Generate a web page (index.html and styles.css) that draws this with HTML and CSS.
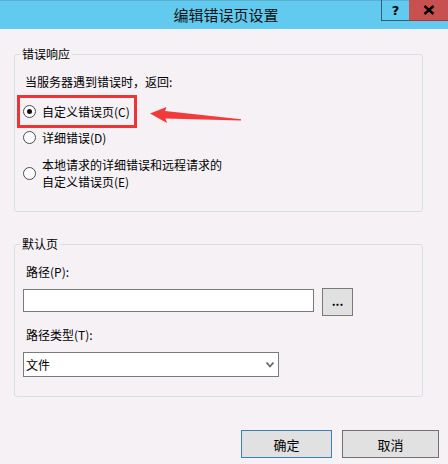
FILE: index.html
```html
<!DOCTYPE html>
<html lang="zh">
<head>
<meta charset="utf-8">
<title>编辑错误页设置</title>
<link rel="stylesheet" href="styles.css">
</head>
<body>
<div class="window">
  <div class="titlebar">
    <div class="title">编辑错误页设置</div>
    <div class="caption-buttons">
      <div class="cap-btn help">?</div>
      <div class="cap-btn close">
        <svg width="12" height="10" viewBox="0 0 12 10"><path d="M1.5 1 L10.5 9 M10.5 1 L1.5 9" stroke="#000" stroke-width="2.4"/></svg>
      </div>
    </div>
  </div>
  <div class="content">
    <fieldset class="group group-response">
      <legend>错误响应</legend>
      <div class="group-body">
        <div class="prompt">当服务器遇到错误时，返回:</div>
        <div class="radio-row row1"><span class="radio checked"></span><span>自定义错误页(C)</span></div>
        <div class="radio-row row2"><span class="radio"></span><span>详细错误(D)</span></div>
        <div class="radio-row row3"><span class="radio"></span><span>本地请求的详细错误和远程请求的<br>自定义错误页(E)</span></div>
      </div>
    </fieldset>
    <fieldset class="group group-default">
      <legend>默认页</legend>
      <div class="group-body">
        <div class="label">路径(P):</div>
        <div class="path-row">
          <div class="textbox"></div>
          <div class="browse">...</div>
        </div>
        <div class="label label-type">路径类型(T):</div>
        <div class="select">
          <span>文件</span>
          <svg width="8" height="6" viewBox="0 0 8 6"><path d="M0.5 0.5 L4 4.5 L7.5 0.5" fill="none" stroke="#6a6a6a" stroke-width="1.8"/></svg>
        </div>
      </div>
    </fieldset>
    <div class="footer">
      <div class="btn ok">确定</div>
      <div class="btn cancel">取消</div>
    </div>
  </div>
  <div class="highlight"></div>
  <svg class="arrow" width="96" height="20" viewBox="148 105 96 20">
    <polygon points="150,113.5 166.5,107 165,111 241,119.3 241,120.6 165.5,118.5 167,123" fill="#f23a3a"/>
  </svg>
</div>
</body>
</html>
```

FILE: styles.css
```css
* { box-sizing: border-box; }
html, body {
  margin: 0;
  padding: 0;
}
body {
  width: 448px;
  height: 464px;
  overflow: hidden;
  background: #f5f1f5;
  font-family: "Noto Sans CJK SC", "Microsoft YaHei", sans-serif;
  font-size: 12px;
  color: #000;
}
.window {
  position: relative;
  width: 448px;
  height: 464px;
}
.titlebar {
  position: relative;
  height: 29px;
  background: #62caee;
  border-top: 1px solid #5aaed0;
  display: flex;
  justify-content: center;
  align-items: center;
}
.title {
  font-size: 15px;
  line-height: 20px;
  color: #111;
  padding-left: 4px;
}
.caption-buttons {
  position: absolute;
  top: -1px;
  right: 0;
  display: flex;
}
.cap-btn {
  height: 21px;
  display: flex;
  align-items: center;
  justify-content: center;
}
.help {
  width: 28px;
  border-left: 1px solid #2e5f76;
  border-bottom: 1px solid #2e5f76;
  font-family: "DejaVu Sans", sans-serif;
  font-weight: bold;
  font-size: 13px;
  line-height: 1;
}
.close {
  width: 39px;
  background: #c75050;
  border-bottom: 1px solid #9e3b3b;
}
.content {
  padding: 17px 25px 0 14px;
}
.group {
  margin: 0;
  padding: 0;
  border: 1px solid #d5dfe6;
  border-radius: 3px;
  min-width: 0;
}
.group legend {
  margin-left: 5px;
  padding: 0 2px;
  line-height: 16px;
  font-size: 12px;
}
.group-response {
  height: 166px;
}
.group-body {
  padding: 0 0 0 8px;
}
.prompt {
  padding: 12px 0 0 2px;
  line-height: 16px;
}
.radio-row {
  display: flex;
  align-items: center;
  gap: 6px;
  line-height: 17px;
}
.row1 { margin-top: 11px; height: 21px; }
.row2 { margin-top: 5px; height: 21px; }
.row3 { margin-top: 8px; }
.radio {
  flex: none;
  width: 13px;
  height: 13px;
  border-radius: 50%;
  border: 1px solid #4d4d4d;
  background: #fdfdfd;
  display: flex;
  align-items: center;
  justify-content: center;
}
.radio.checked::after {
  content: "";
  width: 5px;
  height: 5px;
  border-radius: 50%;
  background: #111;
}
.group-default {
  margin-top: 24px;
  height: 161px;
}
.label {
  padding: 12px 0 0 3px;
  line-height: 16px;
}
.path-row {
  display: flex;
  align-items: flex-start;
  gap: 8px;
  margin-top: 8px;
}
.textbox {
  width: 291px;
  height: 23px;
  margin-top: 1px;
  background: #fff;
  border: 1px solid #7a7a7a;
}
.browse {
  width: 31px;
  height: 28px;
  background: #e1e1e1;
  border: 1px solid #7a7a7a;
  display: flex;
  align-items: center;
  justify-content: center;
  font-weight: bold;
  font-size: 12px;
  line-height: 1;
  padding-bottom: 2px;
}
.label-type {
  padding-top: 11px;
}
.select {
  margin-top: 9px;
  width: 256px;
  height: 25px;
  background: #fff;
  border: 1px solid #7a7a7a;
  display: flex;
  align-items: center;
  justify-content: space-between;
  padding: 0 4px 0 2px;
}
.footer {
  display: flex;
  justify-content: flex-end;
  gap: 10px;
  margin-top: 33px;
  margin-right: -16px;
}
.btn {
  height: 28px;
  background: #e1e1e1;
  display: flex;
  align-items: center;
  justify-content: center;
  font-size: 13px;
}
.ok {
  width: 91px;
  border: 1px solid #3c7fb1;
}
.cancel {
  width: 97px;
  border: 1px solid #707070;
}
.highlight {
  position: absolute;
  left: 17px;
  top: 95px;
  width: 120px;
  height: 33px;
  border: 3px solid #ee3535;
}
.arrow {
  position: absolute;
  left: 148px;
  top: 105px;
}
```
